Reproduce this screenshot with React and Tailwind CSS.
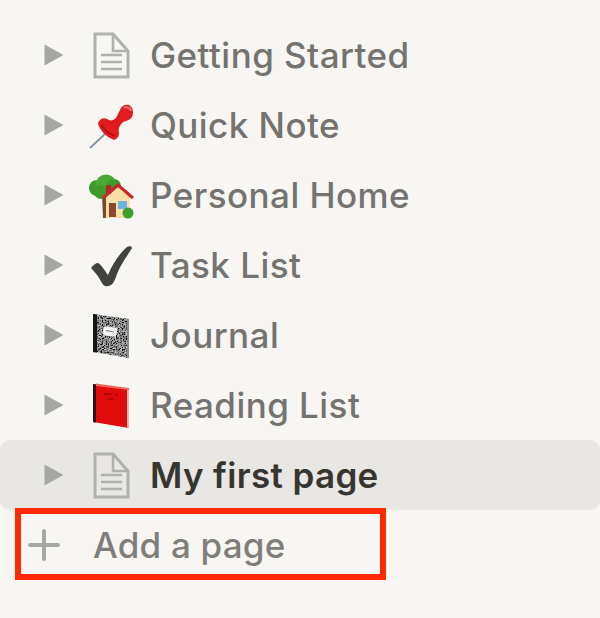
import React from "react";

const Triangle = () => (
  <svg width="20" height="22" viewBox="0 0 20 22" className="shrink-0">
    <path d="M0.5 0.5 L19.5 11 L0.5 21.5 Z" fill="#a6a6a2" />
  </svg>
);

const DocIcon = () => (
  <svg width="48" height="48" viewBox="0 0 48 48">
    <path d="M7 3 H25 L40 20 V46 H7 Z" fill="none" stroke="#b0b0ac" strokeWidth="3" />
    <path d="M25 3 V20 H40" fill="none" stroke="#b0b0ac" strokeWidth="2.6" />
    <path d="M13 24 H34 M13 31 H34 M13 38 H34" stroke="#b0b0ac" strokeWidth="2.6" />
  </svg>
);

const PinIcon = () => (
  <svg width="48" height="48" viewBox="0 0 48 48">
    <path d="M2 47 L18 32" stroke="#7f93a6" strokeWidth="1.8" />
    <path
      d="M10 22 C12 18 15 16 19 18 C22 20 25 20 28 17 L32 9 C33 5 37 3 41 4 C45 6 46 12 44 16 C42 19 38 20 35 21 C32 24 30 27 31 32 C31 37 27 40 24 38 C19 36 11 29 10 22 Z"
      fill="#e01c20"
    />
    <path d="M36 7 C39 5 42 7 43 10" fill="none" stroke="#f7716f" strokeWidth="2" />
    <path d="M13 24 C16 28 21 33 27 35" fill="none" stroke="#b40f14" strokeWidth="2" />
  </svg>
);

const HouseIcon = () => (
  <svg width="48" height="48" viewBox="0 0 48 48">
    <path d="M14 24 H20 V47 H15 Z" fill="#7a4a2a" />
    <circle cx="9" cy="17" r="8" fill="#3f9a2c" />
    <circle cx="18" cy="14" r="10.5" fill="#4aa834" />
    <circle cx="26" cy="15" r="7" fill="#3f9a2c" />
    <circle cx="13" cy="21" r="7" fill="#3f9a2c" />
    <path d="M18 26 L30 16 L42 26 V47 H18 Z" fill="#fbdfa8" />
    <rect x="18" y="14" width="5" height="9" fill="#b5272b" />
    <path d="M15 27 L30 14 L45 27" fill="none" stroke="#c8272c" strokeWidth="3" />
    <rect x="21" y="32" width="7" height="14" fill="#8f4630" />
    <rect x="30" y="30" width="9" height="8" fill="#6db4de" />
    <circle cx="40" cy="42" r="5.5" fill="#3aa02e" />
  </svg>
);

const CheckIcon = () => (
  <svg width="48" height="48" viewBox="0 0 48 48">
    <path
      d="M3 27 C5 24 8 22 10 22 C13 23 17 30 20 34 C25 22 32 12 39 6 C41 5 44 5 44 7 C38 17 32 24 28 36 C26 41 24 45 20 45 C17 46 15 44 14 42 C11 36 7 31 3 27 Z"
      fill="#41413f"
    />
  </svg>
);

const JournalIcon = () => (
  <svg width="48" height="48" viewBox="0 0 48 48">
    <defs>
      {/* soft grey noise for the marbled cover */}
      <filter id="marble" x="0" y="0" width="100%" height="100%">
        <feTurbulence type="fractalNoise" baseFrequency="0.7" numOctaves="2" seed="4" />
        <feColorMatrix
          type="matrix"
          values="1.5 0 0 0 -0.52  1.5 0 0 0 -0.52  1.5 0 0 0 -0.52  0 0 0 0 1"
        />
        <feComposite in2="SourceGraphic" operator="in" />
      </filter>
    </defs>
    <path d="M5 3 L41 8 V47 L5 41 Z" fill="#666" filter="url(#marble)" />
    <path d="M5 3 L9 3.6 V41.6 L5 41 Z" fill="#151515" />
    <path d="M41 8 V47 L39 46.6 V8 Z" fill="#8a8a8a" />
    <rect x="15" y="16" width="14" height="9" rx="3" fill="#f2f2f2" transform="rotate(8 22 20)" />
    <path d="M18 19.5 L26 21" stroke="#777" strokeWidth="1.2" />
  </svg>
);

const RedBookIcon = () => (
  <svg width="48" height="48" viewBox="0 0 48 48">
    <path d="M5 3 L41 8 V47 L5 41 Z" fill="#e10b0b" />
    <path d="M5 3 L8 3.4 V41.5 L5 41 Z" fill="#2c1414" />
    <path d="M8 2.5 L41 7 V9 L8 5 Z" fill="#f0695c" />
    <path d="M39 9 H41 V47 L39 46.6 Z" fill="#e9b4a6" />
    <path d="M16 13 H24 M27 14 H30 M20 18 H26" stroke="#a80808" strokeWidth="1.6" />
  </svg>
);

const pages = [
  { name: "Getting Started", icon: <DocIcon /> },
  { name: "Quick Note", icon: <PinIcon /> },
  { name: "Personal Home", icon: <HouseIcon /> },
  { name: "Task List", icon: <CheckIcon /> },
  { name: "Journal", icon: <JournalIcon /> },
  { name: "Reading List", icon: <RedBookIcon /> },
];

const App = () => {
  return (
    <div className="w-[600px] h-[618px] overflow-hidden bg-[#f7f6f3] pt-[20px] font-['Inter',sans-serif]">
      {pages.map((page) => (
        <div key={page.name} className="flex items-center h-[70px] pl-[44px]">
          <Triangle />
          <div className="ml-[24px] w-[48px] h-[48px] shrink-0">{page.icon}</div>
          <span className="ml-[14px] pt-[1px] text-[35px] tracking-[0.45px] font-medium text-[#74736f]">
            {page.name}
          </span>
        </div>
      ))}

      <div className="flex items-center h-[70px] pl-[44px] bg-[#e8e7e3] rounded-[10px]">
        <Triangle />
        <div className="ml-[24px] w-[48px] h-[48px] shrink-0">
          <DocIcon />
        </div>
        <span className="ml-[14px] pt-[1px] text-[35px] tracking-[0.35px] font-semibold text-[#37352f]">
          My first page
        </span>
      </div>

      <div className="flex items-center h-[72px] w-[371px] ml-[15px] -mt-[2px] pt-[2px] border-[6px] border-[#ff2a00]">
        <svg width="32" height="32" viewBox="0 0 32 32" className="ml-[7px] shrink-0">
          <path d="M16 2 V30 M2 16 H30" stroke="#a6a6a2" strokeWidth="4" strokeLinecap="round" />
        </svg>
        <span className="ml-[33px] text-[35px] tracking-[0.2px] font-medium text-[#7f7e7a]">Add a page</span>
      </div>
    </div>
  );
};

export default App;
